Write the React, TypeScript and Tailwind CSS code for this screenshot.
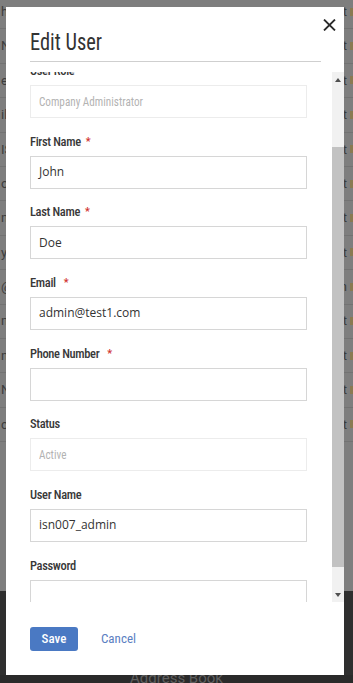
import React from "react";

const leftFrags = ["h", "N", "e", "il", "IS", "o", "n", "y", "@", "n", "n", "N", "c"];
const rightFrags = ["t", "t", "t", "t", "t", "t", "t", "t", "an", "t", "t", "t", "t"];

function Field({
  label,
  required,
  wide,
  value,
  placeholder,
  disabled,
}: {
  label: string;
  required?: boolean;
  wide?: boolean;
  value?: string;
  placeholder?: string;
  disabled?: boolean;
}) {
  return (
    <div className="flex flex-col">
      <div className="h-[16px] leading-[16px] text-[12.5px] tracking-[-0.35px] font-medium text-[#383838] font-['Roboto_Condensed','Liberation_Sans_Narrow','DejaVu_Sans_Condensed',sans-serif] flex items-center">
        <span>{label}</span>
        {required && (
          <span className={`text-[#d0312d] text-[11px] ${wide ? "ml-[8px]" : "ml-[5px]"}`}>*</span>
        )}
      </div>
      <div
        className={`mt-[6px] h-[33px] flex items-center px-[8px] border ${
          disabled ? "border-[#ececec]" : "border-[#d6d6d6]"
        }`}
      >
        {value ? (
          <span className="text-[12px] text-[#333] font-['Open_Sans',sans-serif]">{value}</span>
        ) : placeholder ? (
          <span className="text-[13px] text-[#b3b3b3] font-['Roboto_Condensed','Liberation_Sans_Narrow',sans-serif] origin-left scale-x-[0.86] whitespace-nowrap">
            {placeholder}
          </span>
        ) : null}
      </div>
    </div>
  );
}

export default function App() {
  return (
    <div className="relative w-[353px] h-[683px] overflow-hidden bg-[#7e7e7e] font-['Roboto',sans-serif]">
      {/* background page */}
      <div className="flex flex-col h-full">
        <div className="flex flex-col mt-[-5px]">
          {leftFrags.map((l, i) => (
            <div
              key={i}
              className="h-[34.4px] border-b border-[#727272] flex items-center justify-between text-[13px] text-[#3c3c3c]"
            >
              <span className="pl-[1px]">{l}</span>
              <span className="flex items-center pr-[0px]">
                <span>{rightFrags[i]}</span>
                <span className="ml-[3px] w-[3px] h-[8px] bg-[#8a7a52]" />
              </span>
            </div>
          ))}
        </div>
        <div className="flex-1" />
        <div className="h-[92px] bg-[#2f2f2f] flex flex-col justify-end items-center">
          <div className="h-[8px] w-full bg-[#2a2a2a] flex justify-center overflow-hidden">
            <span className="text-[15px] leading-[15px] mt-[-4px] text-[#5f5f5f]">Address Book</span>
          </div>
        </div>
      </div>

      {/* modal */}
      <div className="absolute left-[6px] top-[7px] w-[338px] h-[668px] bg-white flex flex-col">
        <div className="mx-[24px] mr-[23px] pt-[21px] pb-[5px] border-b border-[#cfcfcf]">
          <div className="text-[24px] leading-[28px] text-[#333] font-['Roboto_Condensed','Liberation_Sans_Narrow',sans-serif] origin-left scale-x-[0.85]">
            Edit User
          </div>
        </div>
        <button className="absolute left-[317px] top-[12px] w-[13px] h-[12px]">
          <svg width="13" height="12" viewBox="0 0 13 12">
            <path d="M1 0.5 L12 11.5 M12 0.5 L1 11.5" stroke="#2b2b2b" strokeWidth="1.8" />
          </svg>
        </button>

        <div className="mt-[10px] h-[530px] flex">
          <div className="flex-1 overflow-hidden pl-[24px] pr-[25px]">
            <div className="mt-[-9px] flex flex-col gap-[15.67px]">
              <Field label="User Role" required placeholder="Company Administrator" disabled />
              <Field label="First Name" required value="John" />
              <Field label="Last Name" required value="Doe" />
              <Field label="Email" required wide value="admin@test1.com" />
              <Field label="Phone Number" required wide />
              <Field label="Status" placeholder="Active" disabled />
              <Field label="User Name" value="isn007_admin" />
              <Field label="Password" />
            </div>
          </div>
          <div className="w-[12px] bg-[#f1f1f1] flex flex-col">
            <div className="h-[15px] flex items-center justify-center">
              <svg width="6" height="4" viewBox="0 0 6 4">
                <path d="M0 4 L3 0 L6 4 Z" fill="#505050" />
              </svg>
            </div>
            <div className="flex-1">
              <div className="mt-[60px] h-[420px] bg-[#c2c2c2]" />
            </div>
            <div className="h-[15px] flex items-center justify-center">
              <svg width="6" height="4" viewBox="0 0 6 4">
                <path d="M0 0 L6 0 L3 4 Z" fill="#505050" />
              </svg>
            </div>
          </div>
        </div>

        <div className="mt-[25px] px-[24px] flex items-center">
          <button className="w-[48px] h-[24px] rounded-[3px] bg-[#4a79c3] text-white text-[13px] font-medium font-['Roboto_Condensed','Liberation_Sans_Narrow',sans-serif]">
            Save
          </button>
          <button className="ml-[23px] text-[13px] text-[#5b80c2] font-['Roboto_Condensed','Liberation_Sans_Narrow',sans-serif]">
            Cancel
          </button>
        </div>
      </div>
    </div>
  );
}
